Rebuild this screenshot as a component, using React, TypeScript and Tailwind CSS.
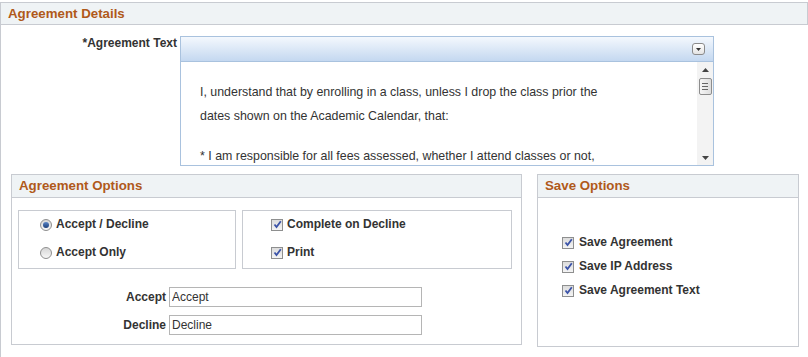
function RadioDot({ checked }: { checked?: boolean }) {
  return (
    <span className="relative inline-block w-[12px] h-[12px] rounded-full border border-[#8f8f8f] bg-gradient-to-b from-[#d6d6d6] to-[#f7f7f7] shrink-0">
      {checked && (
        <span className="absolute left-[2px] top-[2px] w-[6px] h-[6px] rounded-full bg-gradient-to-b from-[#5b86c7] to-[#1d3f7a]" />
      )}
    </span>
  );
}

function CheckBox() {
  return (
    <span className="inline-flex items-center justify-center w-[12px] h-[12px] border border-[#8e8f8f] bg-gradient-to-b from-[#dcdcdc] to-[#f4f4f4] shrink-0">
      <svg width="9" height="9" viewBox="0 0 9 9">
        <path d="M1.5 4.5 L3.5 7 L7.8 1.2" fill="none" stroke="#3b53a8" strokeWidth="1.8" />
      </svg>
    </span>
  );
}

function SectionHead({ title }: { title: string }) {
  return (
    <div className="h-[23px] bg-[#eff3f5] border-b border-[#c8cbd1] pl-[7px] flex items-center text-[13.3px] font-bold text-[#b0591a]">
      {title}
    </div>
  );
}

function Editor() {
  return (
    <div className="w-[534px] h-[130px] border border-[#a9c2de] flex flex-col">
      <div className="h-[25px] border-b border-[#a9c2de] bg-gradient-to-b from-[#f4f8fd] to-[#c4d8f0] flex items-center justify-end pr-[8px]">
        <span className="w-[13px] h-[12px] rounded-[3px] border border-[#8b8b8b] bg-gradient-to-b from-white to-[#e4e4e4] flex items-center justify-center">
          <svg width="5" height="3" viewBox="0 0 5 3">
            <path d="M0 0 H5 L2.5 3 Z" fill="#333" />
          </svg>
        </span>
      </div>
      <div className="flex-1 flex overflow-hidden">
        <div className="flex-1 pl-[19px] pt-[18px] text-[12.4px] text-[#333] overflow-hidden">
          <p className="leading-[24px]">
            I, understand that by enrolling in a class, unless I drop the class prior the
            <br />
            dates shown on the Academic Calendar, that:
          </p>
          <p className="leading-[24px] mt-[16px]">
            * I am responsible for all fees assessed, whether I attend classes or not,
          </p>
        </div>
        <div className="w-[16px] bg-[#f3f3f3] flex flex-col items-center">
          <svg className="mt-[6px]" width="7" height="4" viewBox="0 0 7 4">
            <path d="M0 4 H7 L3.5 0 Z" fill="#444" />
          </svg>
          <div className="mt-[6px] w-[13px] h-[17px] border border-[#8d8d8d] rounded-[2px] bg-gradient-to-r from-[#f6f6f6] to-[#dedede] flex flex-col items-center justify-center gap-[2px]">
            <span className="w-[6px] h-px bg-[#666]" />
            <span className="w-[6px] h-px bg-[#666]" />
            <span className="w-[6px] h-px bg-[#666]" />
          </div>
          <div className="flex-1" />
          <svg className="mb-[5px]" width="7" height="4" viewBox="0 0 7 4">
            <path d="M0 0 H7 L3.5 4 Z" fill="#444" />
          </svg>
        </div>
      </div>
    </div>
  );
}

export default function App() {
  const labelCls = "text-[12px] font-bold text-[#333] leading-[15px]";
  return (
    <div className="w-[808px] h-[357px] bg-white overflow-hidden font-['Liberation_Sans',Arial,sans-serif]">
      <div className="mt-[2px] h-[23px] border border-[#c8cbd1] bg-[#eff3f5] pl-[7px] flex items-center text-[13.3px] font-bold text-[#b0591a]">
        Agreement Details
      </div>
      <div className="h-[332px] border-l border-[#c8cbd1] pt-[11px]">
        <div className="flex">
          <div className={`w-[179px] text-right pr-[3px] ${labelCls}`}>*Agreement Text</div>
          <Editor />
        </div>

        <div className="flex items-start gap-[15px] pl-[10px] mt-[8px]">
          <div className="w-[511px] h-[171px] border border-[#c8cbd1] flex flex-col">
            <SectionHead title="Agreement Options" />
            <div className="flex gap-[6px] pl-[6px] mt-[12px]">
              <div className="w-[218px] h-[59px] border border-[#c8cbd1] pl-[21px] pt-[6px] flex flex-col gap-[13px]">
                <div className="flex items-center gap-[4px]">
                  <RadioDot checked />
                  <span className={labelCls}>Accept / Decline</span>
                </div>
                <div className="flex items-center gap-[4px]">
                  <RadioDot />
                  <span className={labelCls}>Accept Only</span>
                </div>
              </div>
              <div className="w-[270px] h-[59px] border border-[#c8cbd1] pl-[28px] pt-[6px] flex flex-col gap-[13px]">
                <div className="flex items-center gap-[4px]">
                  <CheckBox />
                  <span className={labelCls}>Complete on Decline</span>
                </div>
                <div className="flex items-center gap-[4px]">
                  <CheckBox />
                  <span className={labelCls}>Print</span>
                </div>
              </div>
            </div>
            <div className="mt-[18px] flex flex-col gap-[8px]">
              <div className="flex items-center">
                <span className={`w-[157px] text-right pr-[3px] ${labelCls}`}>Accept</span>
                <input
                  readOnly
                  value="Accept"
                  className="w-[253px] h-[20px] border border-[#b5b5b5] px-[2px] text-[12px] text-[#333] outline-none"
                />
              </div>
              <div className="flex items-center">
                <span className={`w-[157px] text-right pr-[3px] ${labelCls}`}>Decline</span>
                <input
                  readOnly
                  value="Decline"
                  className="w-[253px] h-[20px] border border-[#b5b5b5] px-[2px] text-[12px] text-[#333] outline-none"
                />
              </div>
            </div>
          </div>

          <div className="w-[262px] h-[173px] border border-[#c8cbd1] flex flex-col">
            <SectionHead title="Save Options" />
            <div className="pl-[24px] pt-[37px] flex flex-col gap-[9px]">
              <div className="flex items-center gap-[5px]">
                <CheckBox />
                <span className={labelCls}>Save Agreement</span>
              </div>
              <div className="flex items-center gap-[5px]">
                <CheckBox />
                <span className={labelCls}>Save IP Address</span>
              </div>
              <div className="flex items-center gap-[5px]">
                <CheckBox />
                <span className={labelCls}>Save Agreement Text</span>
              </div>
            </div>
          </div>
        </div>
      </div>
    </div>
  );
}
